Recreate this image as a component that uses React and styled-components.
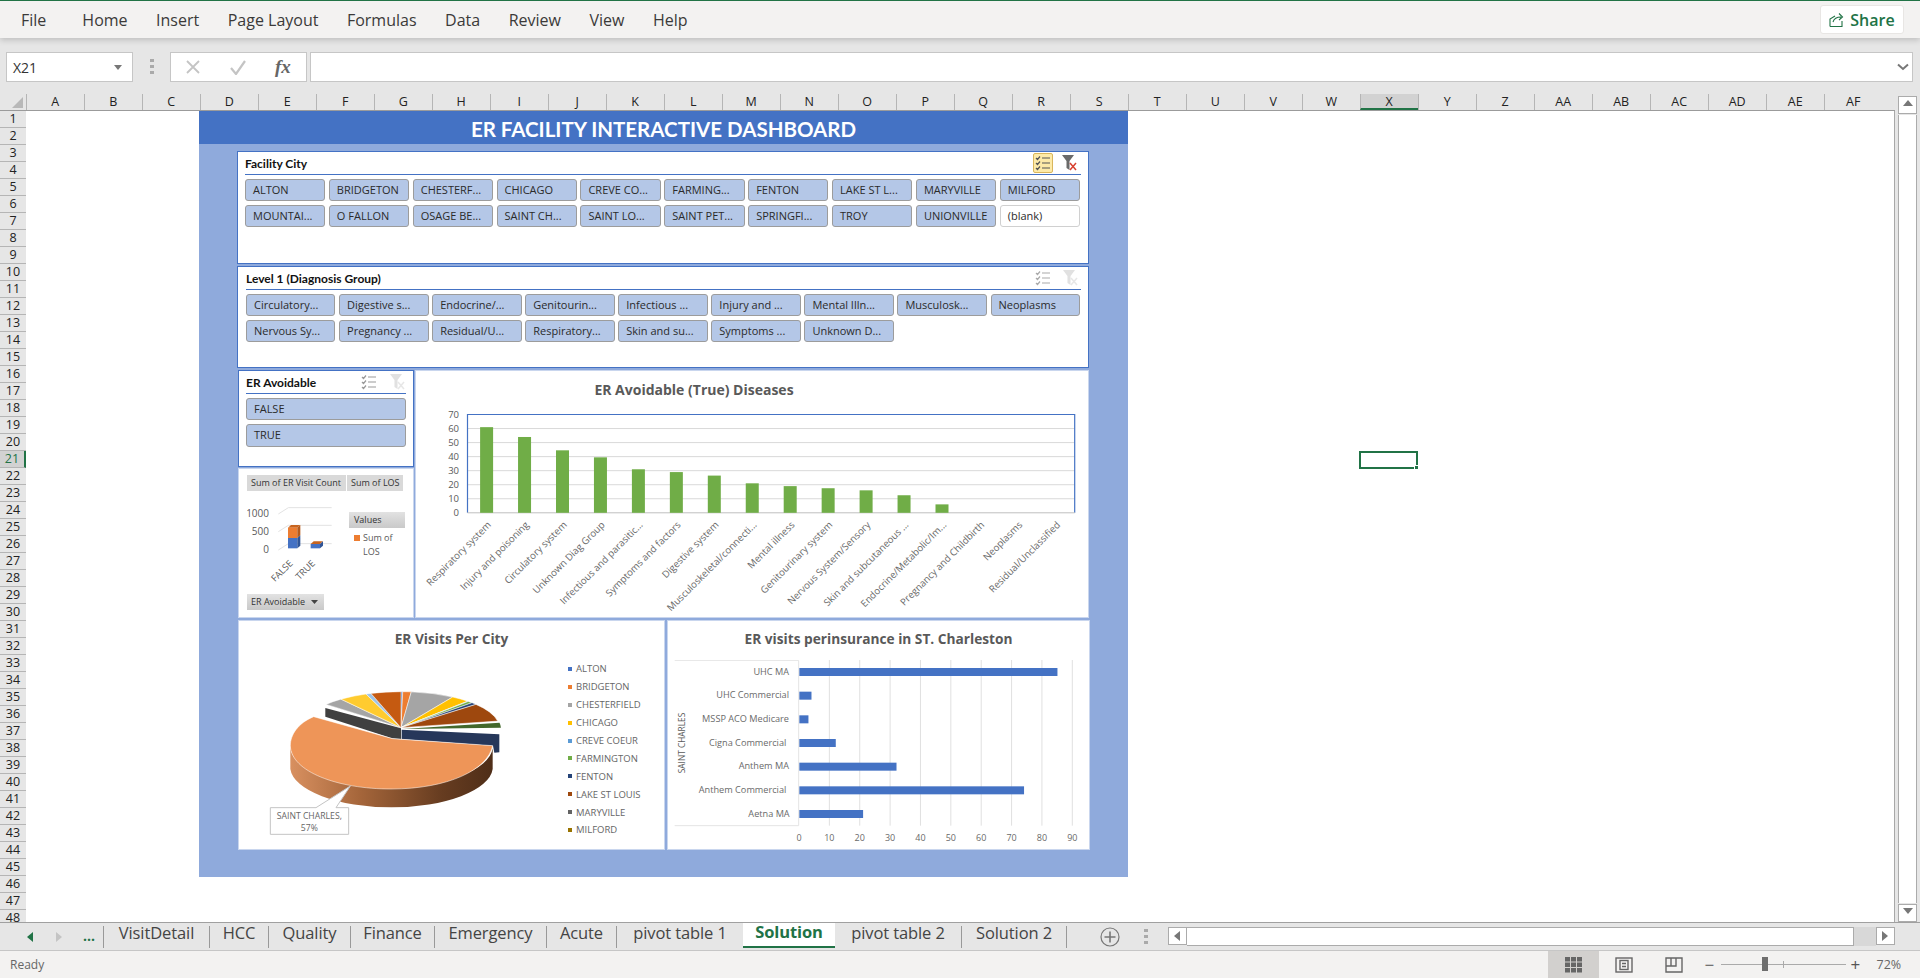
import React from "react";
import styled, { createGlobalStyle } from "styled-components";

const UI_FONT = `"Open Sans", "Noto Sans", sans-serif`;
const CAL_FONT = `Lato, "Open Sans", sans-serif`;
const GREEN = "#217346";

const GlobalStyle = createGlobalStyle`
    html, body {
        margin: 0;
        padding: 0;
        background: #e6e6e6;
    }
    body {
        font-family: ${UI_FONT};
        overflow: hidden;
    }
`;

const Page = styled.div`
    width: 1920px;
    height: 978px;
    display: flex;
    flex-direction: column;
    overflow: hidden;
`;

/* ribbon */
const Ribbon = styled.div`
    height: 37px;
    border-top: 1px solid ${GREEN};
    background: #f3f2f1;
    box-shadow: 0 2px 6px rgba(0, 0, 0, 0.18);
    display: flex;
    align-items: center;
    padding: 0 16px 0 21px;
    position: relative;
    z-index: 2;
`;
const RibbonTab = styled.span`
    font-size: 16px;
    color: #3b3a39;
    margin-right: ${(props) => (props.$file ? "36px" : "28.5px")};
`;
const ShareButton = styled.div`
    margin-left: auto;
    width: 84px;
    height: 29px;
    box-sizing: border-box;
    background: #fff;
    border: 1px solid #e8e6e4;
    border-radius: 3px;
    display: flex;
    align-items: center;
    justify-content: center;
    gap: 5px;
    font-size: 16px;
    font-weight: 600;
    color: ${GREEN};
`;

/* formula bar */
const FormulaBar = styled.div`
    height: 56px;
    background: #e6e6e6;
    box-sizing: border-box;
    padding: 14px 7px 12px 6px;
    display: flex;
    align-items: stretch;
`;
const NameBox = styled.div`
    width: 127px;
    box-sizing: border-box;
    background: #fff;
    border: 1px solid #c6c6c6;
    padding: 0 10px 0 6px;
    display: flex;
    align-items: center;
    justify-content: space-between;
    font-size: 14px;
    color: #333;
`;
const Grip = styled.div`
    width: 37px;
    display: flex;
    align-items: center;
    justify-content: center;
`;
const FxBox = styled.div`
    width: 137px;
    box-sizing: border-box;
    background: #fff;
    border: 1px solid #c6c6c6;
    display: flex;
    align-items: center;
    padding-left: 14px;
    gap: 28px;
    font-family: "Liberation Serif", serif;
    font-style: italic;
    font-weight: 700;
    font-size: 19px;
    color: #666;
`;
const FormulaInput = styled.div`
    flex: 1;
    margin-left: 3px;
    background: #fff;
    border: 1px solid #c6c6c6;
    display: flex;
    align-items: center;
    justify-content: flex-end;
    padding-right: 3px;
`;

/* grid */
const GridArea = styled.div`
    height: 828px;
    display: flex;
`;
const GridMain = styled.div`
    width: 1895px;
    display: flex;
    flex-direction: column;
`;
const ColumnRow = styled.div`
    height: 17px;
    flex: none;
    display: flex;
    box-sizing: border-box;
    background: #e6e6e6;
    border-bottom: 1px solid #9b9b9b;
`;
const Corner = styled.div`
    width: 25.7px;
    display: flex;
    align-items: flex-end;
    justify-content: flex-end;
    padding: 0 3px 2px 0;
    box-sizing: border-box;
`;
const ColumnCell = styled.div`
    width: 58px;
    box-sizing: border-box;
    border-left: 1px solid #b5b5b5;
    border-bottom: ${(props) => (props.$selected ? `2px solid ${GREEN}` : "none")};
    background: ${(props) => (props.$selected ? "#d2d2d2" : "transparent")};
    font-size: 12.5px;
    line-height: 16px;
    text-align: center;
    color: #222;
`;
const SheetRow = styled.div`
    flex: 1;
    display: flex;
    min-height: 0;
`;
const RowHeader = styled.div`
    width: 26px;
    background: #e6e6e6;
    overflow: hidden;
`;
const RowCell = styled.div`
    height: 17px;
    box-sizing: border-box;
    border-bottom: 1px solid #b5b5b5;
    border-right: ${(props) => (props.$selected ? `2px solid ${GREEN}` : "none")};
    background: ${(props) => (props.$selected ? "#d2d2d2" : "transparent")};
    color: ${(props) => (props.$selected ? GREEN : "#222")};
    font-size: 12.5px;
    line-height: 16px;
    text-align: center;
`;
const Sheet = styled.div`
    flex: 1;
    position: relative;
    background: #fff;
    border-right: 1px solid #a8a8a8;
    padding-left: 173px;
    overflow: hidden;
`;
const SelectedCell = styled.div`
    position: absolute;
    left: 1333px;
    top: 340px;
    width: 59px;
    height: 18px;
    box-sizing: border-box;
    border: 2px solid ${GREEN};
    &::after {
        content: "";
        position: absolute;
        right: -3px;
        bottom: -3px;
        width: 5px;
        height: 5px;
        background: ${GREEN};
        border: 1px solid #fff;
        box-sizing: border-box;
    }
`;
const VScroll = styled.div`
    width: 25px;
    background: #e6e6e6;
    display: flex;
    flex-direction: column;
    align-items: center;
    padding: 2px 0 0 0;
    box-sizing: border-box;
`;
const ScrollButton = styled.div`
    width: 19px;
    height: 18px;
    flex: none;
    box-sizing: border-box;
    background: #fff;
    border: 1px solid #ababab;
    display: flex;
    align-items: center;
    justify-content: center;
`;
const VThumb = styled.div`
    flex: 1;
    width: 19px;
    box-sizing: border-box;
    background: #fff;
    border: 1px solid #ababab;
    border-top: none;
    border-bottom: none;
    margin: 1px 0;
`;

/* dashboard */
const Dashboard = styled.div`
    width: 929px;
    height: 766px;
    background: #8faadc;
`;
const DashTitle = styled.div`
    height: 33px;
    background: #4472c4;
    color: #fff;
    font-family: ${CAL_FONT};
    font-weight: 700;
    font-size: 20.5px;
    line-height: 36px;
    text-align: center;
`;
const Board = styled.div`
    margin: 7px 0 0 38px;
    width: 852px;
    display: flex;
    flex-direction: column;
    gap: 2px;
`;
const Slicer = styled.div`
    height: ${(props) => props.$h}px;
    box-sizing: border-box;
    background: #fff;
    border: 1.5px solid #4472c4;
    padding: 0 7px 0 ${(props) => props.$pl || 7}px;
`;
const SlicerHead = styled.div`
    height: 22px;
    display: flex;
    align-items: center;
    border-bottom: 1.5px solid #4472c4;
    font-family: ${CAL_FONT};
    font-weight: 700;
    font-size: 12px;
    color: #111;
`;
const SlicerIcons = styled.div`
    margin-left: auto;
    display: flex;
    align-items: center;
    gap: ${(props) => props.$gap || 15}px;
    padding-right: ${(props) => props.$pr || 2}px;
`;
const MultiToggle = styled.div`
    width: 20px;
    height: 20px;
    box-sizing: border-box;
    display: flex;
    align-items: center;
    justify-content: center;
    border-radius: 2px;
    background: ${(props) => (props.$on ? "#fdeaa8" : "transparent")};
    border: 1px solid ${(props) => (props.$on ? "#d9b65c" : "transparent")};
`;
const SlicerGrid = styled.div`
    margin-top: 3.500px;
    display: grid;
    grid-template-columns: repeat(${(props) => props.$cols}, 1fr);
    grid-auto-rows: 22.5px;
    gap: ${(props) => props.$gap || 3.5}px ${(props) => props.$colGap || 3.6}px;
    margin-right: ${(props) => props.$mr || 0}px;
`;
const SlicerItem = styled.div`
    box-sizing: border-box;
    background: ${(props) => (props.$blank ? "#fff" : "#b4c7e7")};
    border: 1px solid ${(props) => (props.$blank ? "#d0d0d0" : "#9c9c9c")};
    border-radius: 3px;
    padding-left: 7px;
    font-size: 11px;
    line-height: 20px;
    color: #2b2b2b;
    white-space: nowrap;
    overflow: hidden;
`;
const MiddleRow = styled.div`
    height: 248px;
    margin-left: 1px;
    display: flex;
    gap: 1px;
`;
const LeftColumn = styled.div`
    width: 177px;
    display: flex;
    flex-direction: column;
    gap: 1px;
`;
const Card = styled.div`
    box-sizing: border-box;
    background: #fff;
    border: 1px solid #c9d6ee;
    width: ${(props) => (props.$w ? `${props.$w}px` : "auto")};
    height: ${(props) => (props.$h ? `${props.$h}px` : "auto")};
    flex: ${(props) => (props.$w ? "none" : 1)};
`;
const PivotCard = styled(Card)`
    flex: 1;
    padding: 6px 8px 0;
`;
const FieldRow = styled.div`
    display: flex;
    gap: 1px;
    height: 16px;
`;
const FieldButton = styled.div`
    background: #d9d9d9;
    font-size: 9px;
    line-height: 16px;
    padding: 0 4px;
    color: #333;
    white-space: nowrap;
    width: ${(props) => props.$w}px;
    box-sizing: border-box;
`;
const PivotBody = styled.div`
    height: 103px;
    display: flex;
`;
const PivotLegend = styled.div`
    margin: 21px 0 0 2px;
    width: 56px;
    font-size: 9px;
    color: #595959;
`;
const ValuesBox = styled.div`
    height: 16px;
    background: linear-gradient(#e2e2e2, #c9c9c9);
    color: #333;
    line-height: 16px;
    padding-left: 5px;
`;
const LegendEntry = styled.div`
    margin: 3px 0 0 5px;
    line-height: 14px;
    display: flex;
    gap: 3px;
    &::before {
        content: "";
        width: 6px;
        height: 6px;
        margin-top: 4px;
        flex: none;
        background: #ed7d31;
    }
`;
const PivotFilter = styled.div`
    width: 77px;
    height: 16px;
    background: linear-gradient(#e2e2e2, #c9c9c9);
    font-size: 9px;
    line-height: 16px;
    padding-left: 4px;
    box-sizing: border-box;
    color: #333;
    display: flex;
    align-items: center;
    gap: 6px;
`;
const ChartTitle = styled.div`
    height: ${(props) => props.$h}px;
    line-height: ${(props) => props.$lh}px;
    text-align: center;
    font-size: ${(props) => props.$size || 13.7}px;
    font-weight: 700;
    color: #595959;
    margin-right: ${(props) => props.$mr || 0}px;
`;
const ChartSvg = styled.svg`
    display: block;
    flex: none;
    font-family: ${UI_FONT};
`;
const BottomRow = styled.div`
    height: 230px;
    margin-left: 1px;
    display: flex;
    gap: 2px;
`;
const PieRow = styled.div`
    display: flex;
`;
const PieLegend = styled.ul`
    list-style: none;
    margin: 0;
    padding: 0 0 0 4px;
`;
const PieLegendItem = styled.li`
    height: 17.9px;
    display: flex;
    align-items: center;
    gap: 4px;
    font-size: 9.5px;
    color: #666;
    white-space: nowrap;
    &::before {
        content: "";
        width: 4px;
        height: 4px;
        background: ${(props) => props.$color};
    }
`;

/* tabs */
const TabBar = styled.div`
    height: 29px;
    box-sizing: border-box;
    background: #e6e6e6;
    border-top: 1px solid #a0a0a0;
    border-bottom: 1px solid #c6c6c6;
    display: flex;
`;
const TabNav = styled.div`
    width: 103px;
    flex: none;
    display: flex;
    align-items: center;
    padding-left: 25px;
    box-sizing: border-box;
    gap: 17px;
    color: ${GREEN};
    font-size: 14px;
    font-weight: 700;
`;
const Ellipsis = styled.span`
    line-height: 10px;
    padding-bottom: 2px;
`;
const Tab = styled.div`
    box-sizing: border-box;
    height: ${(props) => (props.$active ? "25px" : "22px")};
    margin-top: ${(props) => (props.$active ? "0" : "3px")};
    width: ${(props) => props.$w}px;
    flex: none;
    text-align: center;
    font-size: 16.5px;
    line-height: ${(props) => (props.$active ? "17px" : "13px")};
    white-space: nowrap;
    color: ${(props) => (props.$active ? GREEN : "#444")};
    font-weight: ${(props) => (props.$active ? 700 : 400)};
    background: ${(props) => (props.$active ? "#fff" : "transparent")};
    border-bottom: ${(props) => (props.$active ? `2px solid ${GREEN}` : "none")};
    border-right: ${(props) => (props.$sep ? "1px solid #999" : "none")};
    border-left: ${(props) => (props.$first ? "1px solid #999" : "none")};
    letter-spacing: -0.1px;
`;
const AddSheet = styled.div`
    width: 101px;
    flex: none;
    display: flex;
    align-items: center;
    padding-left: 33px;
    box-sizing: border-box;
    gap: 24px;
`;
const HScroll = styled.div`
    flex: none;
    width: 727px;
    height: 19px;
    margin-top: 4px;
    display: flex;
`;
const HThumb = styled.div`
    width: 667px;
    box-sizing: border-box;
    background: #fff;
    border: 1px solid #ababab;
    border-left: none;
`;
const HTrack = styled.div`
    flex: 1;
    background: #d8d8d8;
`;

/* status bar */
const StatusBar = styled.div`
    height: 27px;
    background: #f3f2f1;
    display: flex;
    align-items: stretch;
    padding-left: 10px;
    font-size: 12px;
    color: #666;
`;
const StatusText = styled.div`
    line-height: 27px;
    margin-right: auto;
`;
const ViewButton = styled.div`
    width: 50.5px;
    display: flex;
    align-items: center;
    justify-content: center;
    background: ${(props) => (props.$on ? "#d2d0ce" : "transparent")};
`;
const ZoomArea = styled.div`
    width: 220.5px;
    display: flex;
    align-items: center;
    padding-left: 5px;
    box-sizing: border-box;
`;
const ZoomSign = styled.span`
    font-size: 17px;
    width: ${(props) => props.$w}px;
    color: #555;
    line-height: 20px;
`;
const ZoomTrack = styled.div`
    position: relative;
    width: 125px;
    height: 1px;
    background: #aaa;
    margin: 0 5px 0 5px;
    &::before {
        content: "";
        position: absolute;
        left: 41px;
        top: -7px;
        width: 6px;
        height: 14px;
        background: #6e6e6e;
    }
    &::after {
        content: "";
        position: absolute;
        left: 62px;
        top: -3px;
        width: 1px;
        height: 7px;
        background: #aaa;
    }
`;
const ZoomValue = styled.span`
    margin-left: 15px;
    font-size: 12.5px;
    color: #666;
`;

const columnNames = "A B C D E F G H I J K L M N O P Q R S T U V W X Y Z AA AB AC AD AE AF".split(" ");
const rows = Array.from({ length: 48 }, (_, i) => i + 1);
const ribbonTabs = ["File", "Home", "Insert", "Page Layout", "Formulas", "Data", "Review", "View", "Help"];
const cities = ["ALTON", "BRIDGETON", "CHESTERF...", "CHICAGO", "CREVE CO...", "FARMING...", "FENTON", "LAKE ST L...", "MARYVILLE", "MILFORD",
    "MOUNTAI...", "O FALLON", "OSAGE BE...", "SAINT CH...", "SAINT LO...", "SAINT PET...", "SPRINGFI...", "TROY", "UNIONVILLE", "(blank)"];
const diagnosis = ["Circulatory...", "Digestive s...", "Endocrine/...", "Genitourin...", "Infectious ...", "Injury and ...", "Mental Illn...", "Musculosk...", "Neoplasms",
    "Nervous Sy...", "Pregnancy ...", "Residual/U...", "Respiratory...", "Skin and su...", "Symptoms ...", "Unknown D..."];
const diseases = [
    ["Respiratory system", 61], ["Injury and poisoning", 54], ["Circulatory system", 44.5], ["Unknown Diag Group", 39.5],
    ["Infectious and parasitic...", 31], ["Symptoms and factors", 29], ["Digestive system", 26.5], ["Musculoskeletal/connecti...", 21],
    ["Mental illness", 19], ["Genitourinary system", 17.5], ["Nervous System/Sensory", 16], ["Skin and subcutaneous ...", 12.5],
    ["Endocrine/Metabolic/Im...", 6], ["Pregnancy and Childbirth", 0], ["Neoplasms", 0], ["Residual/Unclassified", 0],
];
const insurers = [["UHC MA", 85, 385], ["UHC Commercial", 4, 385], ["MSSP ACO Medicare", 3, 385], ["Cigna Commercial", 12, 377],
    ["Anthem MA", 32, 385], ["Anthem Commercial", 74, 377], ["Aetna MA", 21, 387]];
const legendCities = [["ALTON", "#4472c4"], ["BRIDGETON", "#ed7d31"], ["CHESTERFIELD", "#a5a5a5"], ["CHICAGO", "#ffc000"], ["CREVE COEUR", "#5b9bd5"],
    ["FARMINGTON", "#70ad47"], ["FENTON", "#264478"], ["LAKE ST LOUIS", "#9e480e"], ["MARYVILLE", "#636363"], ["MILFORD", "#997300"]];
const sheetTabs = [["VisitDetail", 107], ["HCC", 59], ["Quality", 82], ["Finance", 84], ["Emergency", 112], ["Acute", 70],
    ["pivot table 1", 126, false], ["Solution", 92, true], ["pivot table 2", 127], ["Solution 2", 105]];
const pieSlices = [[0, 1, "#4472c4"], [1, 6, "#ed7d31"], [6, 31.7, "#a5a5a5"], [31.7, 42.7, "#ffc000"], [42.7, 43.2, "#5b9bd5"], [43.2, 46.2, "#70ad47"],
    [46.2, 49.7, "#264478"], [49.7, 79.5, "#9e480e"], [-49.7, -37.6, "#a5a5a5"], [-37.6, -20.8, "#ffcb2f"], [-20.8, -17.8, "#9dc3e6"], [-17.8, 0, "#c55a11"]];

function slicePath(a0, a1, cx = 510, cy = 338, rx = 295, ry = 108) {
    const point = (deg) => {
        const r = (deg * Math.PI) / 180;
        return `${cx + rx * Math.sin(r)} ${cy - ry * Math.cos(r)}`;
    };
    return `M${cx} ${cy} L${point(a0)} A${rx} ${ry} 0 0 1 ${point(a1)} Z`;
}

const MultiIcon = ({ color = "#555" }) => (
    <svg width="16" height="16" viewBox="0 0 16 16" fill="none" stroke={color} strokeWidth="1.2">
        <path d="M1 3l1.5 1.5L5 1.5M1 8l1.5 1.5L5 6.500M1 13l1.500 1.500L5 11.500M7 3h8M7 8h8M7 13h8" />
    </svg>
);
const ClearIcon = ({ dim }) => (
    <svg width="16" height="18" viewBox="0 0 16 18" opacity={dim ? 0.35 : 1}>
        <path d="M1 1h12L8.500 7v9l-3-2V7z" fill={dim ? "#aaa" : "#6a6a6a"} />
        <path d="M9 9l6 7M15 9l-6 7" stroke={dim ? "#bbb" : "#d8402f"} strokeWidth="1.500" />
    </svg>
);
const Triangle = ({ dir, color = "#777" }) => {
    const shapes = { up: "M1 7l5-6 5 6z", down: "M1 1l5 6 5-6z", left: "M8 1L2 6l6 5z", right: "M2 1l6 5-6 5z" };
    return (
        <svg width="12" height="12" viewBox="0 0 12 12" fill={color}><path d={shapes[dir]} /></svg>
    );
};

function ParetoChart() {
    const base = 513.3;
    const unit = 1.404;
    return (
        <ChartSvg width="672" height="212" viewBox="417 405.500 672 212">
            {[10, 20, 30, 40, 50, 60].map((v) => (
                <line key={v} x1="468.500" x2="1075.700" y1={base - v * unit} y2={base - v * unit} stroke="#d9d9d9" strokeWidth="1" />
            ))}
            <path d={`M468.500 ${base} V415 H1075.700 V${base}`} fill="none" stroke="#4472c4" strokeWidth="1.200" />
            <line x1="468.500" x2="1075.700" y1={base} y2={base} stroke="#bfbfbf" />
            {[0, 10, 20, 30, 40, 50, 60, 70].map((v) => (
                <text key={v} x="460" y={base - v * unit + 3.500} textAnchor="end" fontSize="9.500" fill="#595959">{v}</text>
            ))}
            {diseases.map(([name, value], i) => {
                const cx = 487.600 + i * 37.950;
                return (
                    <g key={name}>
                        <rect x={cx - 6.500} y={base - value * unit} width="13" height={value * unit} fill="#70ad47" />
                        <text transform={`translate(${cx + 5} 526) rotate(-45)`} textAnchor="end" fontSize="9.700" fill="#6a6a6a">{name}</text>
                    </g>
                );
            })}
        </ChartSvg>
    );
}

function PivotMiniChart() {
    return (
        <ChartSvg width="100" height="103" viewBox="51 378 300 309">
            {[447, 500, 555].map((y) => (
                <path key={y} d={`M145 ${y} L175 ${y - 19} H305`} fill="none" stroke="#e2e2e2" strokeWidth="3" />
            ))}
            <text x="117" y="456" textAnchor="end" fontSize="30" fill="#595959">1000</text>
            <text x="117" y="510" textAnchor="end" fontSize="30" fill="#595959">500</text>
            <text x="117" y="564" textAnchor="end" fontSize="30" fill="#595959">0</text>
            <path d="M174 488l9-8h28l-9 8z" fill="#c7641f" />
            <rect x="174" y="488" width="28" height="31" fill="#ed7d31" />
            <path d="M202 488l9-8v31l-9 8z" fill="#b55a1c" />
            <rect x="174" y="519" width="28" height="31" fill="#4472c4" />
            <path d="M202 519l9-8v31l-9 8z" fill="#2f5597" />
            <path d="M242 537l9-8h28l-9 8z" fill="#c7641f" />
            <rect x="242" y="537" width="28" height="13" fill="#4472c4" />
            <path d="M270 537l9-8v13l-9 8z" fill="#2f5597" />
            <text transform="translate(190 597) rotate(-45)" textAnchor="end" fontSize="28" fill="#595959">FALSE</text>
            <text transform="translate(257 597) rotate(-45)" textAnchor="end" fontSize="28" fill="#595959">TRUE</text>
        </ChartSvg>
    );
}

function PieChart() {
    return (
        <ChartSvg width="325" height="190" viewBox="24 135 975 570">
            <defs>
                <linearGradient id="pieWall" x1="0" x2="1" y1="0" y2="0">
                    <stop offset="0" stopColor="#d89060" />
                    <stop offset="0.35" stopColor="#a4653a" />
                    <stop offset="0.75" stopColor="#663c20" />
                    <stop offset="1" stopColor="#4f2e18" />
                </linearGradient>
            </defs>
            {pieSlices.map(([a0, a1, color]) => (
                <path key={a0} d={slicePath(a0, a1)} fill={color} stroke="#fff" strokeWidth="1.500" />
            ))}
            <path d={slicePath(80, 88, 515, 342)} fill="#43682b" />
            <path d="M512 344L805 358V412L790 413L786 392L512 372Z" fill="#26375a" />
            <path d="M283 279L510 340V372L483 370L283 305Z" fill="#404040" />
            <path d="M178 400A304 122 0 0 0 785 400V462A304 122 0 0 1 178 462Z" fill="url(#pieWall)" />
            <path d="M485 371L248 305C200 325 178 360 178 392C180 470 320 522 480 522C650 522 770 465 785 392Z" fill="#ee9558" stroke="#fff" strokeWidth="1.500" />
            <path d="M118 578H255L358 513L315 578H353V658H118Z" fill="#fff" stroke="#c4c4c4" strokeWidth="3" />
            <text x="235" y="611" textAnchor="middle" fontSize="26" fill="#666">SAINT CHARLES,</text>
            <text x="235" y="647" textAnchor="middle" fontSize="26" fill="#666">57%</text>
        </ChartSvg>
    );
}

function InsuranceChart() {
    const unit = 9.11;
    return (
        <ChartSvg width="421" height="190" viewBox="22 135 1263 570">
            {[10, 20, 30, 40, 50, 60, 70, 80, 90].map((v) => (
                <line key={v} x1={415 + v * unit} x2={415 + v * unit} y1="135" y2="632" stroke="#e0e0e0" strokeWidth="3" />
            ))}
            <path d="M42 136H414V632H42" fill="none" stroke="#e4e4e4" strokeWidth="3" />
            {insurers.map(([name, value, anchor], i) => {
                const cy = 171 + i * 71;
                return (
                    <g key={name}>
                        <rect x="416" y={cy - 12} width={value * unit} height="24" fill="#4472c4" />
                        <text x={anchor} y={cy + 8} textAnchor="end" fontSize="27.500" fill="#6a6a6a">{name}</text>
                    </g>
                );
            })}
            <text transform="translate(73 384) rotate(-90)" textAnchor="middle" fontSize="25" fill="#595959">SAINT CHARLES</text>
            {[0, 10, 20, 30, 40, 50, 60, 70, 80, 90].map((v) => (
                <text key={v} x={415 + v * unit} y="679" textAnchor="middle" fontSize="27" fill="#6a6a6a">{v}</text>
            ))}
        </ChartSvg>
    );
}

function App() {
    return (
        <Page>
            <GlobalStyle />
            <Ribbon>
                {ribbonTabs.map((name) => (
                    <RibbonTab key={name} $file={name === "File"}>{name}</RibbonTab>
                ))}
                <ShareButton>
                    <svg width="16" height="17" viewBox="0 0 16 17" fill="none" stroke={GREEN} strokeWidth="1.100">
                        <path d="M1 15.500V8l5-3M1 15.500h12V10M4 11c1-3.500 4-5 8-5M10 2.500L13.500 6 10 9" />
                    </svg>
                    Share
                </ShareButton>
            </Ribbon>
            <FormulaBar>
                <NameBox>
                    X21
                    <svg width="8" height="5" viewBox="0 0 8 5" fill="#777"><path d="M0 0h8L4 5z" /></svg>
                </NameBox>
                <Grip>
                    <svg width="4" height="16" viewBox="0 0 4 16" fill="#aaa">
                        <rect width="4" height="3" /><rect y="6" width="4" height="3" /><rect y="12" width="4" height="3" />
                    </svg>
                </Grip>
                <FxBox>
                    <svg width="16" height="16" viewBox="0 0 16 16" stroke="#c4c4c4" strokeWidth="1.800" fill="none"><path d="M2 2l12 12M14 2L2 14" /></svg>
                    <svg width="18" height="16" viewBox="0 0 18 16" stroke="#c4c4c4" strokeWidth="2.200" fill="none"><path d="M2 9l5 6L16 2" /></svg>
                    <span>fx</span>
                </FxBox>
                <FormulaInput>
                    <svg width="12" height="8" viewBox="0 0 12 8" fill="none" stroke="#777" strokeWidth="2"><path d="M1 1.500l5 4.500 5-4.500" /></svg>
                </FormulaInput>
            </FormulaBar>
            <GridArea>
                <GridMain>
                    <ColumnRow>
                        <Corner>
                            <svg width="11" height="11" viewBox="0 0 11 11" fill="#b8b8b8"><path d="M11 0v11H0z" /></svg>
                        </Corner>
                        {columnNames.map((name) => (
                            <ColumnCell key={name} $selected={name === "X"}>{name}</ColumnCell>
                        ))}
                    </ColumnRow>
                    <SheetRow>
                        <RowHeader>
                            {rows.map((n) => (
                                <RowCell key={n} $selected={n === 21}>{n}</RowCell>
                            ))}
                        </RowHeader>
                        <Sheet>
                            <Dashboard>
                                <DashTitle>ER FACILITY INTERACTIVE DASHBOARD</DashTitle>
                                <Board>
                                    <Slicer $h={113}>
                                        <SlicerHead>
                                            Facility City
                                            <SlicerIcons $gap={8} $pr={4}>
                                                <MultiToggle $on><MultiIcon /></MultiToggle>
                                                <ClearIcon />
                                            </SlicerIcons>
                                        </SlicerHead>
                                        <SlicerGrid $cols={10} $mr={1}>
                                            {cities.map((name) => (
                                                <SlicerItem key={name} $blank={name === "(blank)"}>{name}</SlicerItem>
                                            ))}
                                        </SlicerGrid>
                                    </Slicer>
                                    <Slicer $h={102} $pl={8}>
                                        <SlicerHead>
                                            Level 1 (Diagnosis Group)
                                            <SlicerIcons $gap={11} $pr={3}>
                                                <MultiIcon color="#aaa" />
                                                <ClearIcon dim />
                                            </SlicerIcons>
                                        </SlicerHead>
                                        <SlicerGrid $cols={9} $mr={1}>
                                            {diagnosis.map((name) => (
                                                <SlicerItem key={name}>{name}</SlicerItem>
                                            ))}
                                        </SlicerGrid>
                                    </Slicer>
                                    <MiddleRow>
                                        <LeftColumn>
                                            <Slicer $h={97}>
                                                <SlicerHead>
                                                    ER Avoidable
                                                    <SlicerIcons $gap={12} $pr={1}>
                                                        <MultiIcon color="#999" />
                                                        <ClearIcon dim />
                                                    </SlicerIcons>
                                                </SlicerHead>
                                                <SlicerGrid $cols={1} $gap={4}>
                                                    <SlicerItem>FALSE</SlicerItem>
                                                    <SlicerItem>TRUE</SlicerItem>
                                                </SlicerGrid>
                                            </Slicer>
                                            <PivotCard>
                                                <FieldRow>
                                                    <FieldButton $w={99}>Sum of ER Visit Count</FieldButton>
                                                    <FieldButton $w={56}>Sum of LOS</FieldButton>
                                                </FieldRow>
                                                <PivotBody>
                                                    <PivotMiniChart />
                                                    <PivotLegend>
                                                        <ValuesBox>Values</ValuesBox>
                                                        <LegendEntry>Sum of<br />LOS</LegendEntry>
                                                    </PivotLegend>
                                                </PivotBody>
                                                <PivotFilter>
                                                    ER Avoidable
                                                    <svg width="7" height="4" viewBox="0 0 7 4" fill="#444"><path d="M0 0h7L3.500 4z" /></svg>
                                                </PivotFilter>
                                            </PivotCard>
                                        </LeftColumn>
                                        <Card>
                                            <ChartTitle $h={34} $lh={37} $mr={116} $size={14}>ER Avoidable (True) Diseases</ChartTitle>
                                            <ParetoChart />
                                        </Card>
                                    </MiddleRow>
                                    <BottomRow>
                                        <Card $w={427}>
                                            <ChartTitle $h={39} $lh={36}>ER Visits Per City</ChartTitle>
                                            <PieRow>
                                                <PieChart />
                                                <PieLegend>
                                                    {legendCities.map(([name, color]) => (
                                                        <PieLegendItem key={name} $color={color}>{name}</PieLegendItem>
                                                    ))}
                                                </PieLegend>
                                            </PieRow>
                                        </Card>
                                        <Card $w={423}>
                                            <ChartTitle $h={39} $lh={36}>ER visits perinsurance in ST. Charleston</ChartTitle>
                                            <InsuranceChart />
                                        </Card>
                                    </BottomRow>
                                </Board>
                            </Dashboard>
                            <SelectedCell />
                        </Sheet>
                    </SheetRow>
                </GridMain>
                <VScroll>
                    <ScrollButton><Triangle dir="up" /></ScrollButton>
                    <VThumb />
                    <ScrollButton><Triangle dir="down" /></ScrollButton>
                </VScroll>
            </GridArea>
            <TabBar>
                <TabNav>
                    <Triangle dir="left" color={GREEN} />
                    <Triangle dir="right" color="#c4c4c4" />
                    <Ellipsis>...</Ellipsis>
                </TabNav>
                {sheetTabs.map(([name, width, active], i) => (
                    <Tab key={name} $w={width} $active={active} $first={i === 0} $sep={!active && name !== "pivot table 1"}>{name}</Tab>
                ))}
                <AddSheet>
                    <svg width="20" height="20" viewBox="0 0 20 20" fill="none" stroke="#777" strokeWidth="1.200">
                        <circle cx="10" cy="10" r="9" /><path d="M10 4.500v11M4.500 10h11" strokeWidth="1.600" />
                    </svg>
                    <svg width="4" height="16" viewBox="0 0 4 16" fill="#aaa">
                        <rect width="4" height="3" /><rect y="6" width="4" height="3" /><rect y="12" width="4" height="3" />
                    </svg>
                </AddSheet>
                <HScroll>
                    <ScrollButton><Triangle dir="left" /></ScrollButton>
                    <HThumb />
                    <HTrack />
                    <ScrollButton><Triangle dir="right" /></ScrollButton>
                </HScroll>
            </TabBar>
            <StatusBar>
                <StatusText>Ready</StatusText>
                <ViewButton $on>
                    <svg width="17" height="16" viewBox="0 0 17 16" fill="#666">
                        {[0, 6, 12].flatMap((x) => [0, 5.500, 11].map((y) => <rect key={`${x}-${y}`} x={x} y={y} width="5" height="4.500" />))}
                    </svg>
                </ViewButton>
                <ViewButton>
                    <svg width="18" height="16" viewBox="0 0 18 16" fill="none" stroke="#666" strokeWidth="1.400">
                        <rect x="1" y="1" width="16" height="14" /><rect x="5" y="3.500" width="8" height="9" /><path d="M7 6.500h4M7 9.500h4" />
                    </svg>
                </ViewButton>
                <ViewButton>
                    <svg width="18" height="16" viewBox="0 0 18 16" fill="none" stroke="#666" strokeWidth="1.400">
                        <path d="M1 1h16v14H1zM6 1v8h5V1M1 9h5" />
                    </svg>
                </ViewButton>
                <ZoomArea>
                    <ZoomSign $w={11}>−</ZoomSign>
                    <ZoomTrack />
                    <ZoomSign $w={11}>+</ZoomSign>
                    <ZoomValue>72%</ZoomValue>
                </ZoomArea>
            </StatusBar>
        </Page>
    );
}

export default App;
